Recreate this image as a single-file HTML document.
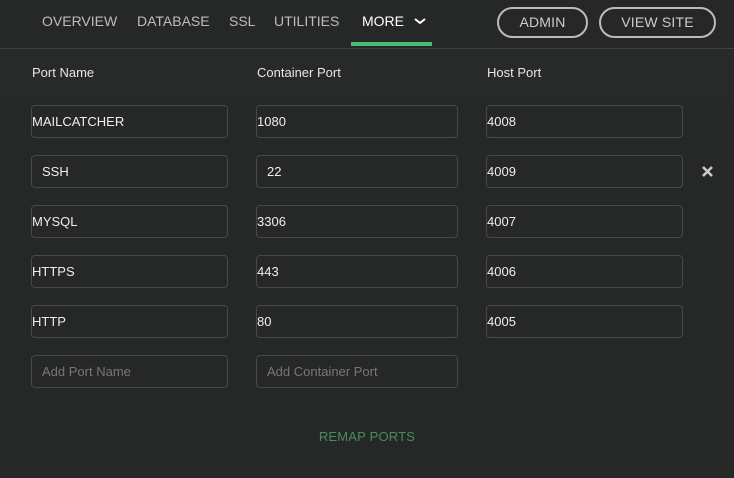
<!DOCTYPE html><html><head><style>
body{margin:0;width:734px;height:478px;background:#262827;font-family:"Liberation Sans",sans-serif;overflow:hidden;position:relative}
.nav{position:absolute;top:0;left:0;width:734px;height:48px;border-bottom:1px solid #3f4140;background:#262827}
.nav span{position:absolute;top:13px;font-size:14px;letter-spacing:0;color:#bdbdbd}
.ul{position:absolute;left:351px;top:42px;width:81px;height:4px;background:#4dbb78}
.btn{position:absolute;top:7px;height:27px;border:2px solid #bbb;border-radius:16px;color:#ccc;font-size:14px;letter-spacing:.2px;text-align:center;line-height:27px}
.hdr{position:absolute;top:49px;left:0;width:734px;height:48px;background:#282a29}
.hdr span{position:absolute;top:16px;font-size:13px;color:#e6e6e6}
.in{position:absolute;height:31px;border:1px solid #474948;border-radius:4px;background:#262827;color:#eee;font-size:13px;line-height:31px;box-sizing:content-box}
.ph{color:#777}
.remap{position:absolute;top:429px;left:0;width:734px;text-align:center;font-size:13px;color:#4b8a63;letter-spacing:.2px}
</style></head><body>
<div class="nav">
<span style="left:42px">OVERVIEW</span><span style="left:137px">DATABASE</span><span style="left:229px">SSL</span><span style="left:274px">UTILITIES</span><span style="left:362px;color:#fff">MORE</span>
<svg style="position:absolute;left:413px;top:17px" width="14" height="9"><path d="M2 2 L7 6 L12 2" stroke="#fff" stroke-width="2" fill="none"/></svg>
<div class="ul"></div>
<div class="btn" style="left:497px;width:87px">ADMIN</div>
<div class="btn" style="left:599px;width:113px">VIEW SITE</div>
</div>
<div class="hdr"><span style="left:32px">Port Name</span><span style="left:257px">Container Port</span><span style="left:487px">Host Port</span></div>
<div class="in" style="left:31px;top:105px;width:195px">MAILCATCHER</div>
<div class="in" style="left:256px;top:105px;width:200px">1080</div>
<div class="in" style="left:486px;top:105px;width:195px">4008</div>
<div class="in" style="left:31px;top:155px;width:185px;padding-left:10px">SSH</div>
<div class="in" style="left:256px;top:155px;width:190px;padding-left:10px">22</div>
<div class="in" style="left:486px;top:155px;width:195px">4009</div>
<svg style="position:absolute;left:701px;top:165px" width="13" height="13"><path d="M2 2L11 11M11 2L2 11" stroke="#ccc" stroke-width="2.5"/></svg>
<div class="in" style="left:31px;top:205px;width:195px">MYSQL</div>
<div class="in" style="left:256px;top:205px;width:200px">3306</div>
<div class="in" style="left:486px;top:205px;width:195px">4007</div>
<div class="in" style="left:31px;top:255px;width:195px">HTTPS</div>
<div class="in" style="left:256px;top:255px;width:200px">443</div>
<div class="in" style="left:486px;top:255px;width:195px">4006</div>
<div class="in" style="left:31px;top:305px;width:195px">HTTP</div>
<div class="in" style="left:256px;top:305px;width:200px">80</div>
<div class="in" style="left:486px;top:305px;width:195px">4005</div>
<div class="in ph" style="left:31px;top:355px;width:185px;padding-left:10px">Add Port Name</div>
<div class="in ph" style="left:256px;top:355px;width:190px;padding-left:10px">Add Container Port</div>
<div class="remap">REMAP PORTS</div>
</body></html>
